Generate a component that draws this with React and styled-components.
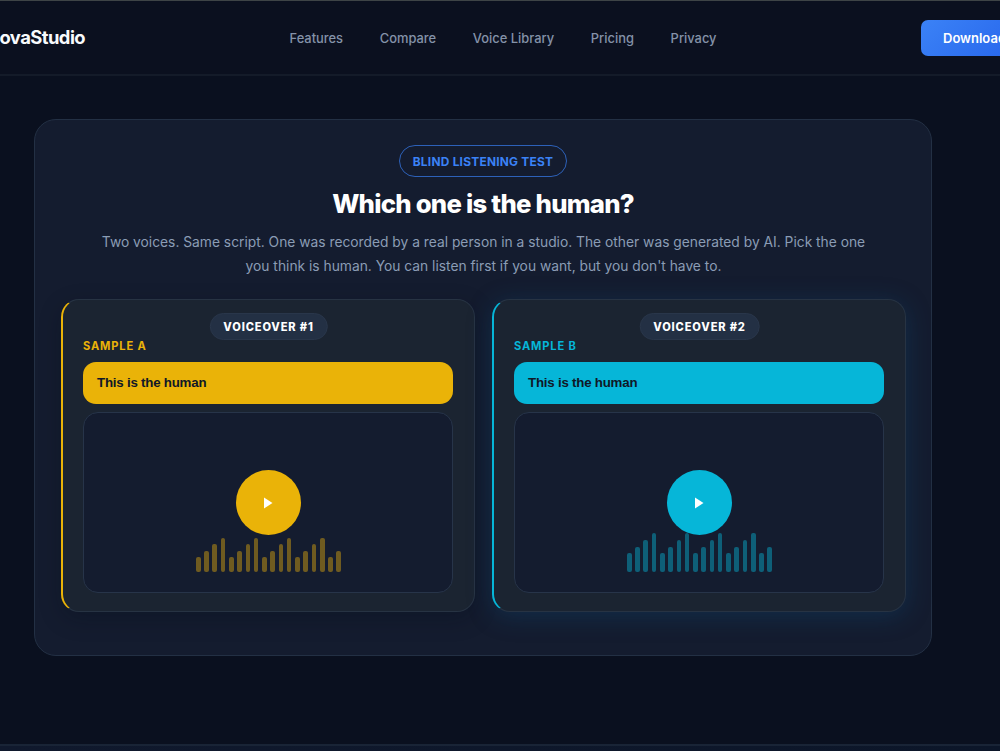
import React from 'react'
import styled, { createGlobalStyle } from 'styled-components'

const GlobalStyle = createGlobalStyle`
  * {
    box-sizing: border-box;
  }

  body {
    margin: 0;
    background-color: #0a101f;
    font-family: Inter, sans-serif;
    overflow: hidden;
  }
`

const Page = styled.div`
  width: 1000px;
  height: 751px;
  overflow: hidden;
  display: flex;
  flex-direction: column;
`

const DesknavBar = styled.nav`
  display: grid;
  grid-template-columns: 289px 1fr 79px;
  align-items: center;
  flex: none;
  height: 76px;
  border-top: 1px solid #3e4446;
  border-bottom: 2px solid #141b29;
  background-color: #0b101f;

  .logo {
    justify-self: start;
    margin: -2px 0 0 -14px;
    color: #f8fafc;
    font-size: 18.4px;
    font-weight: 700;
    letter-spacing: -0.55px;
    white-space: nowrap;
  }

  .nav-links {
    display: flex;
    gap: 36.7px;
    margin: 0;
    padding: 3px 0 0 0.5px;
    list-style: none;
    line-height: 16px;
  }

  .link {
    display: block;
    color: #8492a8;
    font-size: 12.9px;
    font-weight: 500;
    text-decoration: none;
    white-space: nowrap;
  }
`

const DownloadButton = styled.button`
  width: 112px;
  height: 36px;
  padding: 0 0 0 22px;
  border: none;
  border-radius: 7px;
  background: linear-gradient(135deg, #3b82f6, #2563eb);
  color: white;
  font: 600 13px Inter, sans-serif;
  text-align: left;
`

const Panel = styled.section`
  display: flex;
  flex-direction: column;
  flex: none;
  align-items: center;
  width: 898px;
  height: 537px;
  margin: 43px 0 0 34px;
  padding: 25px 25px 0;
  border: 1px solid #233044;
  border-radius: 22px;
  background-color: #141c2f;
`

const Pill = styled.div`
  display: flex;
  align-items: center;
  justify-content: center;
  width: 168px;
  height: 32px;
  border: 1px solid #2d61b9;
  border-radius: 16px;
  color: #3b82f6;
  font-size: 11.9px;
  font-weight: 700;
  letter-spacing: 0.25px;
`

const Title = styled.h2`
  margin: 10px 0 0;
  color: white;
  font-size: 25.7px;
  font-weight: 800;
  letter-spacing: -0.75px;
  line-height: 34px;
`

const Intro = styled.p`
  width: 790px;
  margin: 10px 0 0;
  padding-left: 1px;
  color: #8b9cb5;
  font-size: 13.8px;
  line-height: 23.6px;
  text-align: center;
`

const Samples = styled.div`
  display: grid;
  grid-template-columns: 1fr 1fr;
  gap: 17px;
  align-self: stretch;
  margin: 21px 0 0 1px;
`

const Card = styled.article`
  position: relative;
  height: 313px;
  padding: 38px 21px 0 20px;
  border: 1px solid #273343;
  border-left: 2px solid ${props => props.$color};
  border-radius: 18px;
  background-color: #1b2431;
  box-shadow: ${props => props.$shadow};
`

const Tag = styled.div`
  position: absolute;
  top: 13px;
  left: 50%;
  transform: translateX(-50%);
  height: 27px;
  padding: 0 13px;
  border: 1px solid #29364a;
  border-radius: 14px;
  background-color: #233044;
  color: white;
  font-size: 11.1px;
  font-weight: 800;
  letter-spacing: 0.85px;
  line-height: 26px;
  white-space: nowrap;
`

const SampleName = styled.div`
  color: ${props => props.$color};
  font-size: 11.1px;
  font-weight: 700;
  letter-spacing: 0.85px;
  line-height: 16px;
`

const PickButton = styled.button`
  display: block;
  width: 100%;
  height: 42px;
  margin-top: 8px;
  padding: 0 14px 2px;
  border: none;
  border-radius: 13px;
  background-color: ${props => props.$color};
  color: #101827;
  font: 600 13.3px "Liberation Sans", sans-serif;
  letter-spacing: -0.22px;
  text-align: left;
`

const Player = styled.div`
  display: flex;
  flex-direction: column;
  align-items: center;
  height: 181px;
  margin-top: 8px;
  padding-top: 57px;
  border: 1px solid #273449;
  border-radius: 15px;
  background-color: #141c2f;
`

const PlayButton = styled.button`
  display: flex;
  flex: none;
  align-items: center;
  justify-content: center;
  z-index: 1;
  width: 65px;
  height: 65px;
  padding: 0;
  border: none;
  border-radius: 50%;
  background-color: ${props => props.$color};
`

const Wave = styled.div`
  display: flex;
  align-items: flex-end;
  gap: 3.68px;
  height: 39px;
  margin-top: -2px;
  padding-left: 1px;
`

const Bar = styled.span`
  width: 4.6px;
  height: ${props => props.$height}px;
  border-radius: 2px;
  background-color: ${props => props.$color};
`

const Footer = styled.footer`
  height: 7px;
  margin-top: auto;
  border-top: 2px solid #192436;
  background: linear-gradient(90deg, #10192d, #0c1629);
`

const links = ['Features', 'Compare', 'Voice Library', 'Pricing', 'Privacy']

const samples = [
  {
    tag: 'VOICEOVER #1',
    name: 'SAMPLE A',
    color: '#eab308',
    barColor: '#6f5b20',
    heights: [15, 21, 28, 34],
    shadow: '0 7px 22px rgba(5, 12, 24, 0.25)'
  },
  {
    tag: 'VOICEOVER #2',
    name: 'SAMPLE B',
    color: '#06b6d8',
    barColor: '#0e5f78',
    heights: [19, 25.5, 32, 39],
    shadow: '0 4px 24px rgba(14, 80, 125, 0.34)'
  }
]

const Sample = ({ sample }) => {
  return (
    <Card $color={sample.color} $shadow={sample.shadow}>
      <Tag>{sample.tag}</Tag>
      <SampleName $color={sample.color}>{sample.name}</SampleName>
      <PickButton $color={sample.color}>This is the human</PickButton>
      <Player>
        <PlayButton $color={sample.color} aria-label='Play'>
          <svg width='10' height='12' viewBox='0 0 10 12'>
            <path d='M1 .5v11L9.5 6z' fill='white' />
          </svg>
        </PlayButton>
        <Wave>
          {Array.from({ length: 18 }, (_, i) => (
            <Bar key={i} $color={sample.barColor} $height={sample.heights[i % 4]} />
          ))}
        </Wave>
      </Player>
    </Card>
  )
}

const App = () => {
  return (
    <Page>
      <GlobalStyle />
      <DesknavBar>
        <div className='logo'>NovaStudio</div>
        <ul className='nav-links'>
          {links.map(link => (
            <li key={link}><a className='link'>{link}</a></li>
          ))}
        </ul>
        <DownloadButton>Download</DownloadButton>
      </DesknavBar>
      <Panel>
        <Pill>BLIND LISTENING TEST</Pill>
        <Title>Which one is the human?</Title>
        <Intro>
          Two voices. Same script. One was recorded by a real person in a studio. The other was generated by AI. Pick the one<br />
          you think is human. You can listen first if you want, but you don't have to.
        </Intro>
        <Samples>
          {samples.map(sample => <Sample key={sample.name} sample={sample} />)}
        </Samples>
      </Panel>
      <Footer />
    </Page>
  )
}

export default App
